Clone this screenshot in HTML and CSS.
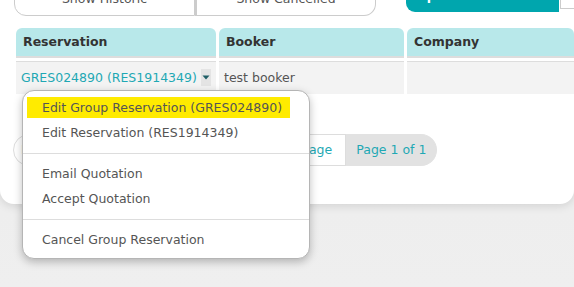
FILE: index.html
```html
<!DOCTYPE html>
<html lang="en">
<head>
    <meta charset="UTF-8">
    <title>Group Reservations</title>
    <link rel="stylesheet" href="styles.css">
</head>
<body>
    <div class="Panel">
        <div class="Toolbar">
            <div class="Filtros">
                <button type="button" class="filtro izq">Show Historic</button>
                <button type="button" class="filtro der">Show Cancelled</button>
            </div>
            <div class="Fecha">
                <button type="button" class="fechaBtn">Departure From Date</button>
                <input type="text" class="fechaInput" value="">
            </div>
        </div>

        <div class="Tabla">
            <div class="th">Reservation</div>
            <div class="th">Booker</div>
            <div class="th">Company</div>

            <div class="td">
                <a href="#" class="reslink">GRES024890 (RES1914349)</a>
                <span class="caret"><svg width="8" height="5" viewBox="0 0 8 5"><path d="M0.5 0.5 L7.5 0.5 L4 4.5 Z" fill="#1f5e66"/></svg></span>
            </div>
            <div class="td">test booker</div>
            <div class="td"></div>
        </div>

        <div class="Paginacion">
            <span class="pag primero">First Page</span>
            <span class="pag">Previous Page</span>
            <span class="pag">Next Page</span>
            <span class="pag ultimo">Last Page</span>
            <span class="pag actual">Page 1 of 1</span>
        </div>

        <ul class="Menu">
            <li class="activo">Edit Group Reservation (GRES024890)</li>
            <li>Edit Reservation (RES1914349)</li>
            <li class="sep"></li>
            <li>Email Quotation</li>
            <li>Accept Quotation</li>
            <li class="sep"></li>
            <li>Cancel Group Reservation</li>
        </ul>
    </div>
</body>
</html>
```

FILE: styles.css
```css
body {
    font-family: 'DejaVu Sans', sans-serif;
    margin: 0;
    height: 287px;
    background: linear-gradient(#d6d6d6, #ececec 60px, #efefef);
    overflow: hidden;
}

.Panel {
    position: relative;
    background-color: #fff;
    height: 204px;
    border-radius: 0 0 14px 14px;
    box-shadow: 0 2px 10px rgba(0, 0, 0, 0.12);
}

.Toolbar {
    display: flex;
    align-items: flex-start;
    padding-left: 14px;
}

.Filtros {
    display: flex;
    margin-top: -17px;
}

.filtro {
    width: 181px;
    font-family: inherit;
    font-size: 12.5px;
    line-height: 14px;
    color: #555;
    background-color: #fff;
    border: 1px solid #ccc;
    padding: 8px 0 9px;
}

.izq {
    border-radius: 0 0 0 12px;
}

.der {
    border-left: 2px solid #ccc;
    border-radius: 0 0 12px 0;
}

.Fecha {
    display: flex;
    margin-left: 30px;
    margin-top: -19px;
}

.fechaBtn {
    width: 153px;
    font-family: inherit;
    font-size: 12.5px;
    line-height: 14px;
    font-weight: bold;
    color: #fff;
    background-color: #00a6ae;
    border: none;
    border-radius: 0 0 0 9px;
    padding: 8px 0 9px;
}

.fechaInput {
    width: 30px;
    height: 26px;
    border: 1px solid #ccc;
    margin-left: 1px;
    padding: 0;
}

.Tabla {
    display: grid;
    grid-template-columns: 200px 185px 1fr;
    column-gap: 3px;
    padding-left: 16px;
    margin-top: 12px;
}

.th {
    background-color: #b8e8ea;
    height: 28px;
    line-height: 28px;
    padding-left: 7px;
    font-size: 12.5px;
    font-weight: bold;
    color: #333;
    border-radius: 6px 6px 0 0;
    border-bottom: 2px solid #ddd;
}

.td {
    margin-top: 3px;
    height: 30px;
    background-color: #f3f3f3;
    border-top: 1px solid #ddd;
    display: flex;
    align-items: center;
    padding-left: 5px;
    padding-bottom: 2px;
    font-size: 12.5px;
    color: #555;
}

.reslink {
    color: #1fa8b4;
    text-decoration: none;
}

.caret {
    display: flex;
    align-items: center;
    justify-content: center;
    width: 10px;
    height: 17px;
    margin-left: 4px;
    background-color: #e4e4e4;
}

.Paginacion {
    display: flex;
    margin: 40px 0 0 13px;
    font-size: 12.5px;
    color: #1fa8b4;
}

.pag {
    height: 30px;
    line-height: 30px;
    padding: 0 7px;
    border: 1px solid #ddd;
    border-left: none;
    background-color: #fff;
}

.primero {
    border-left: 1px solid #ddd;
    border-radius: 16px 0 0 16px;
}

.ultimo {
    padding: 0 13px 0 2px;
}

.actual {
    padding: 0 10px;
    background-color: #e2e2e2;
    border-color: #e2e2e2;
    border-radius: 0 16px 16px 0;
}

.Menu {
    position: absolute;
    left: 22px;
    top: 90px;
    width: 286px;
    margin: 0;
    padding: 6px 0 6px;
    list-style: none;
    background-color: #fff;
    border: 1px solid #b5b5b5;
    border-radius: 12px;
    box-shadow: 0 3px 8px rgba(0, 0, 0, 0.25);
    font-size: 12.5px;
    color: #555;
}

.Menu li {
    height: 25px;
    line-height: 25px;
    padding-left: 19px;
}

.Menu .activo {
    background-color: #ffeb00;
    margin: 0 19px 0 4px;
    padding-left: 15px;
    height: 21px;
    line-height: 21px;
    margin-bottom: 2px;
}

.Menu .sep {
    height: 0;
    border-top: 1px solid #ddd;
    margin: 8px 0 7px;
}
```
